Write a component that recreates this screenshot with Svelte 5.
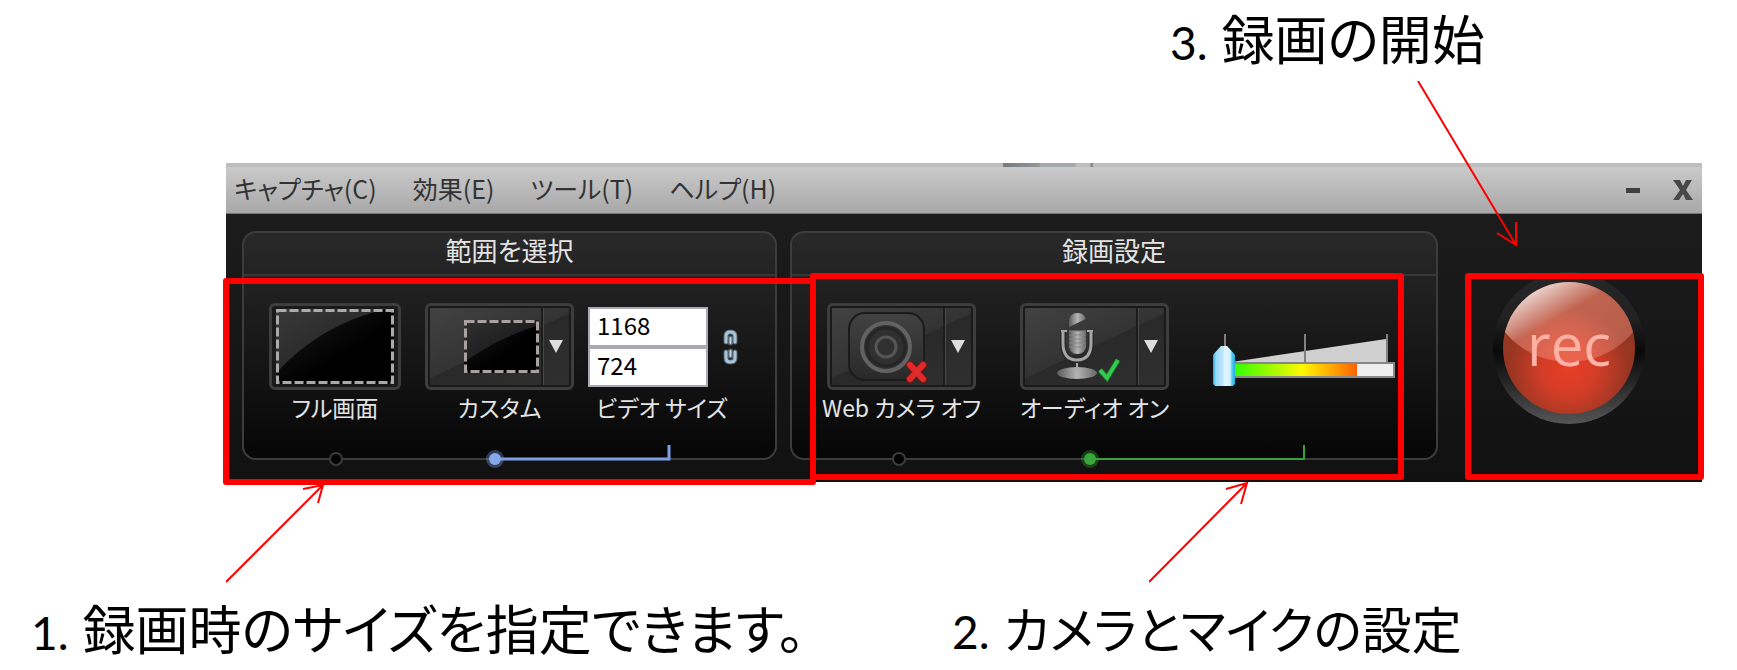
<script>
    let videoWidth = "1168";
    let videoHeight = "724";
    let volume = 0;
    const menus = ["キャプチャ(C)", "効果(E)", "ツール(T)", "ヘルプ(H)"];
</script>

<main>
    <p class="caption start"><span>3.</span>録画の開始</p>

    <div class="recorder">
        <header>
            <i class="remnant"></i>
            <nav>
                {#each menus as menu}
                    <button class="menu">{menu}</button>
                {/each}
            </nav>
            <div class="window-buttons">
                <button aria-label="最小化">
                    <svg width="14" height="5"><rect width="14" height="5" fill="#3f3f3f" /></svg>
                </button>
                <button aria-label="閉じる">
                    <svg width="20" height="20" viewBox="0 0 20 20">
                        <path d="M0 0h7l3 6 3-6h6l-6 10 7 10h-7l-3-6-4 6H0l7-10z" fill="#484848" />
                    </svg>
                </button>
            </div>
        </header>

        <div class="content">
            <section class="panel area">
                <h2>範囲を選択</h2>
                <div class="controls">
                    <div class="item">
                        <button class="full" aria-labelledby="full-label">
                            <svg width="118" height="75" viewBox="0 0 118 75">
                                <defs>
                                    <linearGradient id="dark" x1="0" y1="0" x2="1" y2="1">
                                        <stop offset="0" stop-color="#1c1c1c" />
                                        <stop offset="0.6" stop-color="#000" />
                                    </linearGradient>
                                    <linearGradient id="shine" x1="0" y1="0" x2="1" y2="1">
                                        <stop offset="0" stop-color="#393939" />
                                        <stop offset="1" stop-color="#1c1c1c" />
                                    </linearGradient>
                                </defs>
                                <rect width="118" height="75" fill="url(#dark)" />
                                <path d="M0 0H110Q45 15 0 64z" fill="url(#shine)" />
                                <rect x="1.5" y="1.5" width="115" height="72" fill="none" stroke="#aaa" stroke-width="3" stroke-dasharray="9 3" />
                            </svg>
                        </button>
                        <span class="label" id="full-label">フル画面</span>
                    </div>
                    <div class="item">
                        <div class="split">
                            <button class="main custom" aria-labelledby="custom-label">
                                <svg width="75" height="53" viewBox="0 0 75 53">
                                    <rect width="75" height="53" fill="url(#dark)" />
                                    <path d="M0 0H75V5Q36 17 0 42z" fill="url(#shine)" opacity="0.7" />
                                    <rect x="1.5" y="1.5" width="72" height="50" fill="none" stroke="#aaa1a1" stroke-width="3" stroke-dasharray="9 3" />
                                </svg>
                            </button>
                            <button class="drop" aria-label="カスタム サイズ一覧">
                                <svg width="14" height="13"><path d="M0 0h14L7 13z" fill="#ddd" /></svg>
                            </button>
                        </div>
                        <span class="label" id="custom-label">カスタム</span>
                    </div>
                    <div class="item size">
                        <div class="dimensions">
                            <div class="fields">
                                <input aria-label="ビデオの幅" bind:value={videoWidth} />
                                <input aria-label="ビデオの高さ" bind:value={videoHeight} />
                            </div>
                            <button class="link" aria-label="縦横比を固定">
                                <svg width="15" height="36" viewBox="0 0 15 36" fill="none" stroke-linecap="round">
                                    <path d="M3 13V7q0-4 4.500-4T12 7v6M3 23v6q0 4 4.500 4T12 29v-6M7.500 9v5M7.500 22v5" stroke="#52616c" stroke-width="5" />
                                    <path d="M3 13V7q0-4 4.500-4T12 7v6M3 23v6q0 4 4.500 4T12 29v-6" stroke="#a9c3d8" stroke-width="3" />
                                    <path d="M7.500 9v5M7.500 22v5" stroke="#c3d6e5" stroke-width="2" />
                                </svg>
                            </button>
                        </div>
                        <span class="label">ビデオ サイズ</span>
                    </div>
                </div>
                <svg class="track" width="440" height="32" viewBox="0 0 440 32">
                    <circle cx="92" cy="19" r="6" fill="#000" stroke="#3c3c3c" stroke-width="2" />
                    <path d="M251 19H425V5" fill="none" stroke="#7d9fe6" stroke-width="3" />
                    <circle cx="251" cy="19" r="9" fill="#7d9fe6" opacity="0.35" />
                    <circle cx="251" cy="19" r="6" fill="#85a8ed" />
                </svg>
            </section>

            <section class="panel settings">
                <h2>録画設定</h2>
                <div class="controls">
                    <div class="item">
                        <div class="split">
                            <button class="main" aria-labelledby="camera-label">
                                <svg width="82" height="74" viewBox="0 0 82 74">
                                    <defs>
                                        <linearGradient id="lens" x1="0" y1="0" x2="0" y2="1">
                                            <stop offset="0" stop-color="#424242" />
                                            <stop offset="1" stop-color="#292929" />
                                        </linearGradient>
                                    </defs>
                                    <rect x="2" y="3" width="75" height="67" rx="16" fill="url(#lens)" stroke="#1b1b1b" stroke-width="2" />
                                    <circle cx="39" cy="37" r="24" fill="#303030" stroke="#626262" stroke-width="4" />
                                    <circle cx="39" cy="37" r="19" fill="none" stroke="#252525" stroke-width="3" />
                                    <circle cx="39" cy="37" r="10" fill="#303030" stroke="#555" stroke-width="3" />
                                    <path d="M63 55l13 14M76 55L63 69" stroke="#7b1717" stroke-width="8" stroke-linecap="round" />
                                    <path d="M63 55l13 14M76 55L63 69" stroke="#e02929" stroke-width="6" stroke-linecap="round" />
                                </svg>
                            </button>
                            <button class="drop" aria-label="カメラを選択">
                                <svg width="14" height="13"><path d="M0 0h14L7 13z" fill="#ddd" /></svg>
                            </button>
                        </div>
                        <span class="label" id="camera-label">Web カメラ オフ</span>
                    </div>
                    <div class="item">
                        <div class="split">
                            <button class="main audio" aria-labelledby="audio-label">
                                <svg width="66" height="72" viewBox="0 0 66 72">
                                    <defs>
                                        <linearGradient id="metal">
                                            <stop offset="0" stop-color="#5a5a5a" />
                                            <stop offset="0.5" stop-color="#b4b4b4" />
                                            <stop offset="1" stop-color="#666" />
                                        </linearGradient>
                                    </defs>
                                    <ellipse cx="21" cy="62" rx="20" ry="6" fill="url(#metal)" />
                                    <path d="M21 48v12" stroke="#aaa" stroke-width="2" />
                                    <path d="M7 20v12q0 17 14 17t14-17V20" fill="none" stroke="#292929" stroke-width="6" />
                                    <path d="M7 20v12q0 17 14 17t14-17V20" fill="none" stroke="#a5a5a5" stroke-width="3" />
                                    <path d="M5 20h6M31 20h6" stroke="#a5a5a5" stroke-width="2" />
                                    <rect x="13" y="2" width="17" height="41" rx="8" fill="url(#metal)" />
                                    <path d="M13 16l17-8v12H13z" fill="#3a3a3a" />
                                    <path d="M13 20h17M13 24h17M13 28h17M13 32h17M13 36h17" stroke="#858585" stroke-width="1" />
                                    <path d="M44 59l7 8 11-18" fill="none" stroke="#176322" stroke-width="6" />
                                    <path d="M44 59l7 8 11-18" fill="none" stroke="#35c951" stroke-width="4" />
                                </svg>
                            </button>
                            <button class="drop" aria-label="マイクを選択">
                                <svg width="14" height="13"><path d="M0 0h14L7 13z" fill="#ddd" /></svg>
                            </button>
                        </div>
                        <span class="label" id="audio-label">オーディオ オン</span>
                    </div>
                    <div class="volume">
                        <svg width="182" height="56" viewBox="0 0 182 56">
                            <defs>
                                <linearGradient id="level">
                                    <stop offset="0" stop-color="#1cff00" />
                                    <stop offset="0.58" stop-color="#fff800" />
                                    <stop offset="1" stop-color="#ff6200" />
                                </linearGradient>
                            </defs>
                            <path d="M12 30L173 6v24z" fill="#d0d0d0" />
                            <path d="M12 1v30M92 1v30M174 1v30" stroke="#808080" stroke-width="2" />
                            <rect x="13" y="30" width="168" height="14" fill="#eee" stroke="#888" stroke-width="2" />
                            <rect x="14" y="31" width="130" height="12" fill="url(#level)" />
                        </svg>
                        <input type="range" min="0" max="100" aria-label="録音レベル" bind:value={volume} />
                    </div>
                </div>
                <svg class="track" width="530" height="32" viewBox="0 0 530 32">
                    <circle cx="107" cy="19" r="6" fill="#000" stroke="#3c3c3c" stroke-width="2" />
                    <path d="M298 19H512V5" fill="none" stroke="#37a237" stroke-width="2" />
                    <circle cx="298" cy="19" r="9" fill="#37a237" opacity="0.35" />
                    <circle cx="298" cy="19" r="6" fill="#3aa53a" />
                </svg>
            </section>

            <div class="rec-area">
                <button class="rec"><span>rec</span></button>
            </div>
        </div>

        <!-- callouts -->
        <i class="box box-size"></i>
        <i class="box box-devices"></i>
        <i class="box box-rec"></i>
        <svg class="arrow arrow-size" width="102" height="102" viewBox="0 0 102 102">
            <path d="M0 99L97 2M77 6l20-4-5 18" />
        </svg>
        <svg class="arrow arrow-devices" width="102" height="102" viewBox="0 0 102 102">
            <path d="M0 100L98 1M77 7l21-6-6 21" />
        </svg>
        <svg class="arrow arrow-rec" width="102" height="168" viewBox="0 0 102 168">
            <path d="M1 0l98 164M80 152l19 12V141" />
        </svg>
    </div>

    <div class="captions">
        <p class="caption"><span>1.</span>録画時のサイズを指定できます。</p>
        <p class="caption narrow"><span>2.</span>カメラとマイクの設定</p>
    </div>
</main>

<style>
    :global(body) {
        margin: 0;
        background: #fff;
    }

    main {
        font-family: "Noto Sans CJK JP", sans-serif;
        font-feature-settings: "palt";
    }

    button {
        padding: 0;
        border: 0;
        background: none;
        color: inherit;
        font: inherit;
        font-feature-settings: inherit;
        cursor: pointer;
    }

    svg {
        display: block;
    }

    .caption {
        margin: 0;
        font-size: 53px;
        line-height: 74px;
        white-space: nowrap;
        color: #000;
    }

    .narrow {
        font-size: 50px;
    }

    .caption span {
        margin-right: 14px;
        font-family: Lato, sans-serif;
        font-size: 46px;
    }

    .start {
        height: 163px;
        padding-left: 1170px;
    }

    .recorder {
        position: relative;
        margin: 0 35px 0 226px;
        background: linear-gradient(#1e1e1e, #111);
    }

    header {
        position: relative;
        box-sizing: border-box;
        display: flex;
        align-items: center;
        justify-content: space-between;
        height: 51px;
        padding: 0 9px 0 8px;
        border-top: 4px solid #bdbdbd;
        border-bottom: 1px solid #777;
        background: linear-gradient(#cacaca, #a8a8a8);
        color: #333;
    }

    .remnant {
        position: absolute;
        top: -4px;
        left: 777px;
        width: 90px;
        height: 4px;
        background: linear-gradient(90deg, #767b80, #929699 36px, #a3a8ab 37px, #a3a8ab 72px, #bdbdbd 73px, #bdbdbd 87px, #888 88px);
    }

    nav {
        display: flex;
        gap: 36px;
        padding-bottom: 4px;
    }

    .menu {
        font-size: 25px;
        line-height: 40px;
    }

    .window-buttons {
        display: flex;
        align-items: center;
        gap: 33px;
    }

    .content {
        display: flex;
        gap: 13px;
        height: 268px;
        padding-left: 16px;
        box-sizing: border-box;
    }

    .panel {
        position: relative;
        box-sizing: border-box;
        height: 229px;
        margin-top: 17px;
        border: 2px solid #3c3c3c;
        border-radius: 14px;
        background: linear-gradient(#292929, #222 44px, #060606);
        color: #e4e4e4;
    }

    .area {
        flex: 0 0 535px;
    }

    .settings {
        flex: 0 0 648px;
    }

    h2 {
        margin: 0;
        height: 41px;
        border-bottom: 2px solid #383838;
        font-size: 26px;
        font-weight: 400;
        line-height: 34px;
        text-align: center;
    }

    .controls {
        display: flex;
        padding-top: 27px;
    }

    .area .controls {
        gap: 24px;
        padding-left: 25px;
    }

    .settings .controls {
        gap: 44px;
        padding-left: 35px;
    }

    .item {
        display: flex;
        flex-direction: column;
        align-items: center;
        width: 149px;
    }

    .item:first-child:has(.full) {
        width: 132px;
    }

    .full,
    .split {
        box-sizing: border-box;
        display: flex;
        height: 87px;
        border: 3px solid #3d3d3d;
        border-radius: 6px;
        background: #1a1a1a;
    }

    .full {
        align-items: center;
        justify-content: center;
        width: 132px;
    }

    .split {
        width: 149px;
        padding: 2px;
        background: linear-gradient(155deg, #424242, #333 49%, #292929 50%, #303030) content-box, #191919;
    }

    .main {
        display: flex;
        flex: 1;
        align-items: center;
        justify-content: center;
    }

    .custom {
        justify-content: flex-end;
        padding-right: 2px;
    }

    .audio {
        padding-left: 16px;
    }

    .drop {
        display: flex;
        align-items: center;
        justify-content: center;
        width: 28px;
        border-left: 2px solid #1c1c1c;
        box-shadow: inset 1px 0 #484848;
    }

    .label {
        font-size: 23px;
        line-height: 34px;
        white-space: nowrap;
    }

    .size {
        align-items: flex-start;
        margin-left: -10px;
    }

    .size .label {
        padding-left: 8px;
    }

    .dimensions {
        display: flex;
        align-items: center;
        gap: 15px;
        height: 87px;
    }

    .fields {
        display: flex;
        flex-direction: column;
        width: 120px;
    }

    .fields input {
        box-sizing: border-box;
        width: 100%;
        height: 40px;
        padding: 0 7px 4px;
        border: 2px solid #a9a9b3;
        border-radius: 0;
        background: #fff;
        color: #000;
        font-family: "Noto Sans CJK JP", sans-serif;
        font-size: 24px;
    }

    .track {
        position: absolute;
        left: 0;
        bottom: -14px;
    }

    .volume {
        position: relative;
        width: 182px;
        padding-top: 30px;
    }

    .volume input {
        position: absolute;
        top: 43px;
        left: 0;
        width: 182px;
        height: 40px;
        margin: 0;
        appearance: none;
        background: none;
    }

    .volume input::-webkit-slider-thumb {
        appearance: none;
        width: 22px;
        height: 40px;
        background: linear-gradient(90deg, #25a9dc, #8ee2ff 3px, #a5dcf8 5px, #c0e6fc 10px, #e6f6ff 12px, #d2efff 17px, #53cdf5 19px, #25a9dc);
        clip-path: polygon(0 22%, 36% 0, 64% 0, 100% 22%, 100% 95%, 90% 100%, 10% 100%, 0 95%);
    }

    .rec-area {
        display: flex;
        flex: 1;
        justify-content: center;
        align-items: flex-start;
        padding: 58px 15px 0 0;
    }

    .rec {
        width: 152px;
        height: 152px;
        padding: 10px;
        border-radius: 50%;
        background: linear-gradient(#262626, #222 30%, #090909 52%, #222 70%, #555);
    }

    .rec span {
        position: relative;
        display: block;
        height: 132px;
        border-radius: 50%;
        overflow: hidden;
        background: radial-gradient(circle at 50% 65%, #e93d25, #d43d27 25%, #983622 55%, #8f3320);
        color: #ffb3a8;
        font-family: "Open Sans", sans-serif;
        font-size: 58px;
        line-height: 124px;
    }

    .rec span::before {
        position: absolute;
        content: "";
        top: -70px;
        left: -14px;
        width: 160px;
        height: 150px;
        border-radius: 50%;
        background: linear-gradient(150deg, rgba(255, 255, 255, 0.95) 38%, rgba(255, 170, 150, 0.4) 60%, rgba(255, 190, 175, 0.25));
    }

    .box {
        position: absolute;
        box-sizing: border-box;
        border: 6px solid #f00;
        border-radius: 3px;
        pointer-events: none;
    }

    .box-size {
        top: 115px;
        left: -3px;
        width: 593px;
        height: 207px;
    }

    .box-devices {
        top: 110px;
        left: 584px;
        width: 594px;
        height: 207px;
    }

    .box-rec {
        top: 110px;
        right: -2px;
        width: 239px;
        height: 207px;
    }

    .arrow {
        position: absolute;
        fill: none;
        stroke: #f00;
        stroke-width: 2;
        pointer-events: none;
    }

    .arrow-size {
        top: 320px;
        left: 0;
    }

    .arrow-devices {
        top: 319px;
        left: 923px;
    }

    .arrow-rec {
        top: -82px;
        right: 183px;
    }

    .captions {
        display: grid;
        grid-template-columns: 921px 1fr;
        padding: 108px 0 0 31px;
    }
</style>
